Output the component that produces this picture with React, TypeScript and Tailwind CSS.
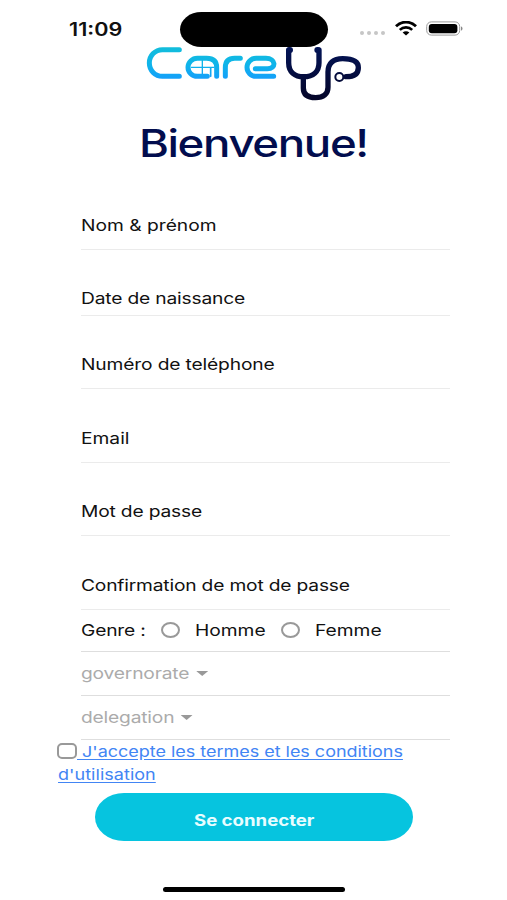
import clsx from "clsx";
import type { ReactNode } from "react";

const fields = [
  { label: "Nom & prénom", row: "h-[74px] pb-3" },
  { label: "Date de naissance", row: "h-[66px] pb-[5px] tracking-[-0.15px]" },
  { label: "Numéro de teléphone", row: "h-[73px] pb-3 tracking-[-0.12px]" },
  { label: "Email", row: "h-[74px] pb-3" },
  { label: "Mot de passe", row: "h-[73px] pb-3 tracking-[-0.15px]" },
  { label: "Confirmation de mot de passe", row: "h-[74px] pb-3 tracking-[-0.15px]" },
];

function Wide({ children, className = "origin-left" }: { children: ReactNode; className?: string }) {
  return (
    <span className={clsx("inline-block scale-x-[1.2] whitespace-nowrap", className)}>
      {children}
    </span>
  );
}

function StatusBar() {
  return (
    <header className="flex h-[47px] items-start">
      <div className="w-[180px] pt-[18px] pl-[69px]">
        <Wide className="origin-left text-[18px] leading-6 font-semibold">11:09</Wide>
      </div>
      <div className="mt-3 h-[35px] w-[148px] rounded-[22px/18px] bg-black" />
      <div className="flex items-center pt-[21px] pl-8">
        <div className="mt-[9px] flex gap-[3px]">
          {[0, 1, 2, 3].map((i) => (
            <span key={i} className="h-1 w-1 rounded-full bg-[#c6c6c6]" />
          ))}
        </div>
        <svg className="ml-[10px]" width="22" height="15" viewBox="0 0 22 15" fill="none">
          <path d="M1 5.3C6.6 -.3 15.4 -.3 21 5.3" stroke="#000" strokeWidth="2.8" />
          <path d="M4.8 8.9C8.3 5.5 13.7 5.5 17.2 8.9" stroke="#000" strokeWidth="2.6" />
          <path d="M7.6 11.6C9.6 9.8 12.4 9.8 14.4 11.6L11 14.6Z" fill="#000" />
        </svg>
        <svg className="ml-[9px]" width="38" height="15" viewBox="0 0 38 15">
          <rect x=".7" y=".9" width="33" height="13.2" rx="4.6" fill="none" stroke="#999" />
          <rect x="2.8" y="2.9" width="28.6" height="9.3" rx="3" />
          <path d="M35 5.5C37 6.2 37 9 35 9.7Z" fill="#888" />
        </svg>
      </div>
    </header>
  );
}

function Logo() {
  return (
    <svg
      className="-mt-px ml-[130px] block"
      width="250"
      height="56"
      viewBox="0 138 750 168"
      fill="none"
      strokeLinecap="round"
      strokeLinejoin="round"
    >
      <defs>
        <linearGradient id="care" gradientUnits="userSpaceOnUse" x1="0" y1="142" x2="0" y2="237">
          <stop stopColor="#12bddb" />
          <stop offset=".55" stopColor="#0fb4ea" />
          <stop offset="1" stopColor="#159ffa" />
        </linearGradient>
        <linearGradient id="up" gradientUnits="userSpaceOnUse" x1="0" y1="142" x2="0" y2="300">
          <stop stopColor="#031456" />
          <stop offset="1" stopColor="#050629" />
        </linearGradient>
      </defs>
      <g stroke="url(#care)" strokeWidth="15">
        <path d="M148 149H97A39 40 0 0 0 97 229H148" />
        <path d="M232 229H202A28 27 0 0 1 202 175H230Q260 175 260 203V229" />
        <path d="M286 229V203Q286 175 314 175H331" />
        <path d="M431 229H378A27 27 0 0 1 378 175H408C438 175 440 206 412 206H376" />
        <path d="M184 202H252M217 180V226" strokeWidth="4" />
        <path d="M242 204V229" strokeWidth="5" />
      </g>
      <g stroke="url(#up)" strokeWidth="16">
        <path d="M476 150V188C476 216 494 230 521 230C550 230 567 214 567 188V150" />
        <path d="M480 150H479M562 150H563" strokeWidth="18" />
        <path d="M520 230V264C520 284 534 293 557 293C580 293 594 282 594 262V216C594 190 610 176 638 176C668 176 685 185 685 203C685 222 670 230 648 230" />
        <circle cx="628" cy="231" r="12" fill="#fff" strokeWidth="6" />
      </g>
    </svg>
  );
}

function Radio({ label }: { label: string }) {
  return (
    <label className="flex items-center">
      <span className="h-4 w-[19px] rounded-[50%] border-2 border-[#999]" />
      <Wide className="ml-[15px] origin-left">{label}</Wide>
    </label>
  );
}

function Select({ label }: { label: string }) {
  return (
    <div className="flex h-11 items-center border-b-[1.5px] border-[#dedede] pb-0.5 tracking-[-0.15px] text-[#ababab]">
      <Wide>
        {label}
        <svg className="ml-[5.5px] inline-block align-[3px]" width="10" height="5" viewBox="0 0 10 5">
          <path d="M0 0H10L5 5Z" fill="#999" />
        </svg>
      </Wide>
    </div>
  );
}

export default function App() {
  return (
    <main className="flex h-[900px] w-[507px] flex-col overflow-hidden bg-white font-['Inter',sans-serif] text-base leading-6 text-[#111]">
      <StatusBar />
      <Logo />
      <h1 className="mt-[17px] h-[57px] text-center text-[38px] leading-[48px] font-medium tracking-[-0.03em] text-[#020d4e]">
        <Wide className="origin-center">Bienvenue!</Wide>
      </h1>

      <form className="ml-[81px] w-[369px]">
        {fields.map((field) => (
          <div key={field.label} className={clsx("flex items-end border-b border-[#ebebeb]", field.row)}>
            <Wide>{field.label}</Wide>
          </div>
        ))}
        <div className="flex h-[42px] items-center border-b-[1.5px] border-[#dedede] pb-0.5">
          <Wide className="w-20 origin-left tracking-[-0.15px]">Genre :</Wide>
          <div className="flex gap-[27.5px]">
            <Radio label="Homme" />
            <Radio label="Femme" />
          </div>
        </div>
        <Select label="governorate" />
        <Select label="delegation" />
      </form>

      <div className="ml-[57px] h-[47px] text-[15px] text-[#4285f4]">
        <div className="flex h-[23px] items-center">
          <span className="mb-px h-4 w-5 shrink-0 rounded-[5px] border-2 border-[#999]" />
          <Wide className="origin-left tracking-[-0.02px] whitespace-pre underline underline-offset-2"> J'accepte les termes et les conditions</Wide>
        </div>
        <Wide className="ml-[0.5px] origin-left tracking-[0.03px] underline underline-offset-2">d'utilisation</Wide>
      </div>

      <button className="mt-[6px] ml-[95px] h-12 w-[318px] rounded-[29px/24px] bg-[#06c4df] pt-[7px] text-[15.5px] font-bold text-[#e8fdff]">
        <Wide className="origin-center">Se connecter</Wide>
      </button>
      <div className="mt-[46px] ml-[163px] h-[5px] w-[182px] rounded-full bg-black" />
    </main>
  );
}
